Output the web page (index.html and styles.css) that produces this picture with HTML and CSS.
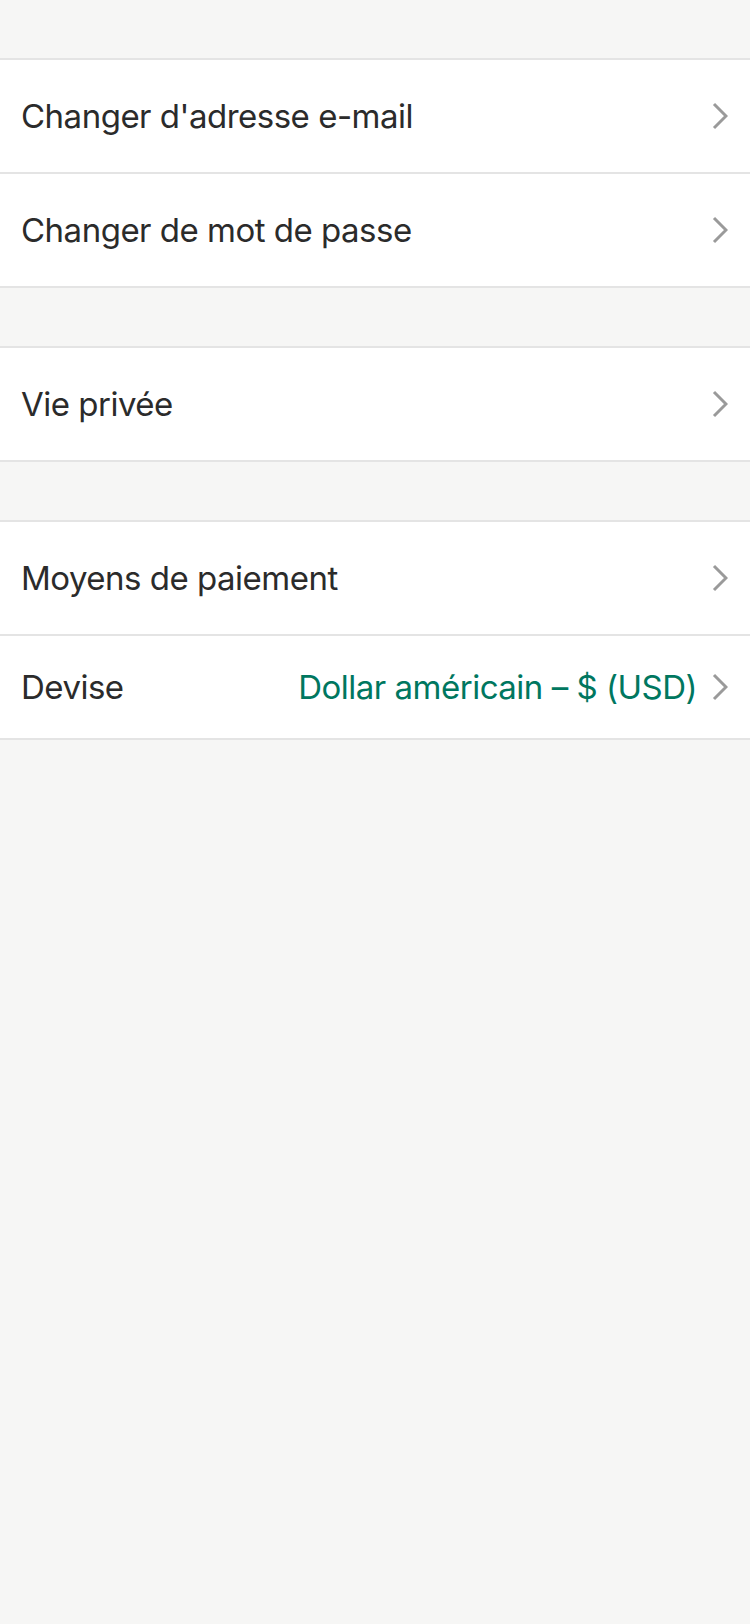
FILE: index.html
```html
<!DOCTYPE html>
<html lang="fr">
<head>
<meta charset="utf-8">
<title>Paramètres</title>
<link rel="stylesheet" href="styles.css">
</head>
<body>
<main class="page">
  <section class="group">
    <a class="row" href="#"><span class="label">Changer d'adresse e-mail</span><span class="chev"><svg viewBox="0 0 16 28" width="16" height="28"><path d="M2 2 L14 14 L2 26" fill="none" stroke="#9a9a9a" stroke-width="3"/></svg></span></a>
    <a class="row" href="#"><span class="label">Changer de mot de passe</span><span class="chev"><svg viewBox="0 0 16 28" width="16" height="28"><path d="M2 2 L14 14 L2 26" fill="none" stroke="#9a9a9a" stroke-width="3"/></svg></span></a>
  </section>
  <section class="group">
    <a class="row" href="#"><span class="label">Vie privée</span><span class="chev"><svg viewBox="0 0 16 28" width="16" height="28"><path d="M2 2 L14 14 L2 26" fill="none" stroke="#9a9a9a" stroke-width="3"/></svg></span></a>
  </section>
  <section class="group">
    <a class="row" href="#"><span class="label">Moyens de paiement</span><span class="chev"><svg viewBox="0 0 16 28" width="16" height="28"><path d="M2 2 L14 14 L2 26" fill="none" stroke="#9a9a9a" stroke-width="3"/></svg></span></a>
    <a class="row row-short" href="#"><span class="label">Devise</span><span class="value">Dollar américain – $ (USD)</span><span class="chev"><svg viewBox="0 0 16 28" width="16" height="28"><path d="M2 2 L14 14 L2 26" fill="none" stroke="#9a9a9a" stroke-width="3"/></svg></span></a>
  </section>
</main>
</body>
</html>
```
FILE: styles.css
```css
html, body {
  margin: 0;
  padding: 0;
  background: #f6f6f5;
}
body {
  font-family: Inter, "Noto Sans", sans-serif;
  min-height: 1624px;
}
.page {
  display: flex;
  flex-direction: column;
  gap: 58px;
  padding-top: 58px;
}
.group {
  display: flex;
  flex-direction: column;
  background: #fff;
  border-top: 2px solid #e4e4e4;
}
.row {
  display: flex;
  align-items: center;
  height: 112px;
  padding: 0 22px 0 21px;
  border-bottom: 2px solid #e4e4e4;
  text-decoration: none;
  color: #2a2a2a;
}
.row-short {
  height: 102px;
}
.label {
  flex: 1;
  font-size: 33px;
  letter-spacing: -0.5px;
  color: #2b2b2b;
}
.value {
  font-size: 33px;
  letter-spacing: -0.5px;
  color: #00775f;
  margin-right: 15px;
}
.chev {
  display: flex;
  width: 16px;
  height: 28px;
}
```
